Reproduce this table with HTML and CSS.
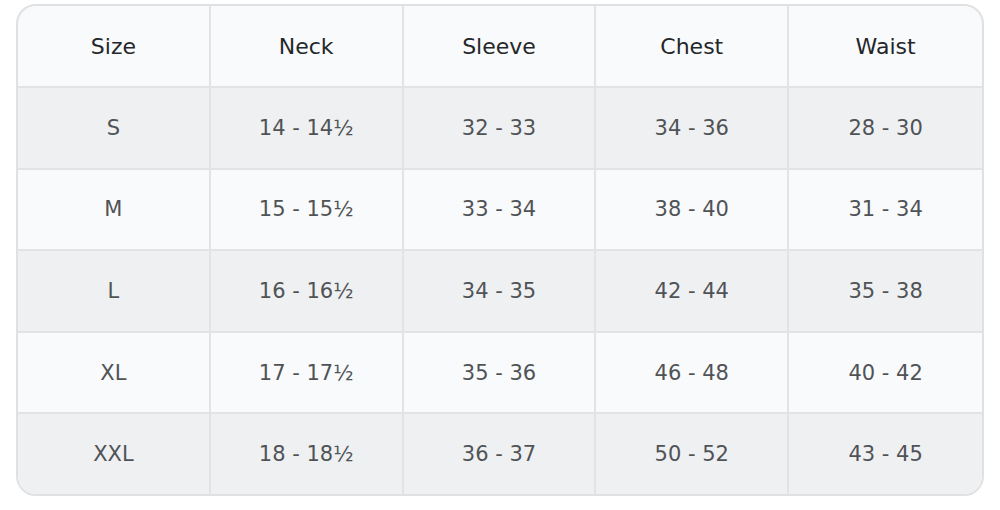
FILE: index.html
```html
<!DOCTYPE html>
<html>
<head>
<meta charset="utf-8">
<link rel="stylesheet" href="styles.css">
</head>
<body>
<div class="wrap">
<table class="chart">
<thead>
<tr><th>Size</th><th>Neck</th><th>Sleeve</th><th>Chest</th><th>Waist</th></tr>
</thead>
<tbody>
<tr class="alt"><td>S</td><td>14 - 14½</td><td>32 - 33</td><td>34 - 36</td><td>28 - 30</td></tr>
<tr><td>M</td><td>15 - 15½</td><td>33 - 34</td><td>38 - 40</td><td>31 - 34</td></tr>
<tr class="alt"><td>L</td><td>16 - 16½</td><td>34 - 35</td><td>42 - 44</td><td>35 - 38</td></tr>
<tr><td>XL</td><td>17 - 17½</td><td>35 - 36</td><td>46 - 48</td><td>40 - 42</td></tr>
<tr class="alt"><td>XXL</td><td>18 - 18½</td><td>36 - 37</td><td>50 - 52</td><td>43 - 45</td></tr>
</tbody>
</table>
</div>
</body>
</html>
```
FILE: styles.css
```css
html, body {
  margin: 0;
  padding: 0;
  background: #ffffff;
}
.wrap {
  padding: 4px 16px 0 16px;
}
.chart {
  width: 968px;
  border-collapse: separate;
  border-spacing: 0;
  border: 2px solid #dfe1e3;
  border-radius: 20px;
  overflow: hidden;
  table-layout: fixed;
  font-family: "DejaVu Sans", Verdana, sans-serif;
  font-size: 21px;
  color: #505356;
  background: #f9fafb;
}
.chart th, .chart td {
  height: 79.6px;
  padding: 0;
  text-align: center;
  vertical-align: middle;
  border-right: 2px solid #e1e3e5;
  border-bottom: 2px solid #e1e3e5;
}
.chart th {
  height: 80px;
}
.chart th:last-child, .chart td:last-child {
  border-right: none;
}
.chart tbody tr:last-child td {
  border-bottom: none;
}
.chart th {
  font-weight: normal;
  color: #24272a;
  font-size: 22px;
}
.chart tr.alt td {
  background: #eef0f2;
}
```
